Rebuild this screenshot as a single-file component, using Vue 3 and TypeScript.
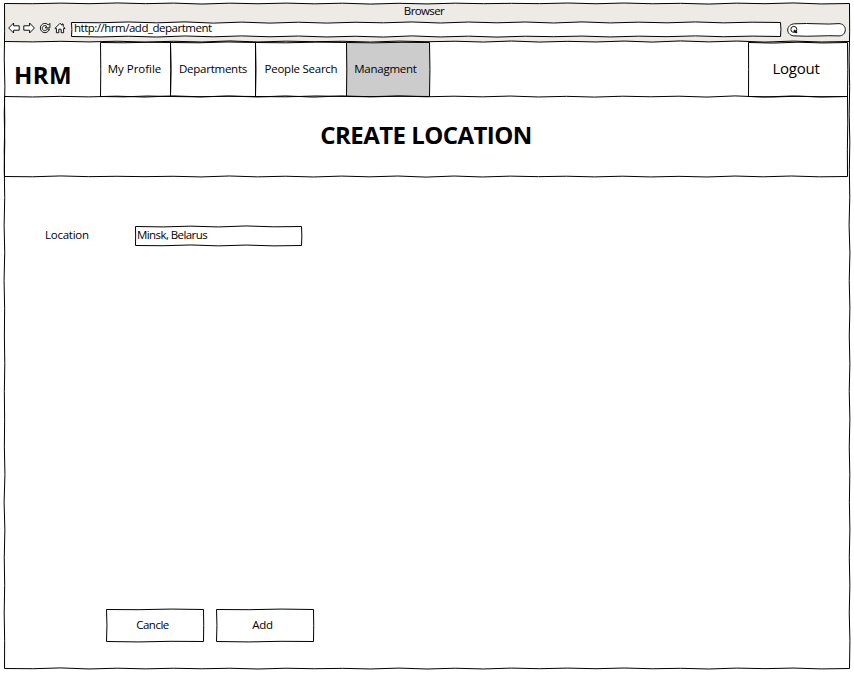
<script setup lang="ts">
import { h, ref, type FunctionalComponent } from 'vue'

type Side = 't' | 'r' | 'b' | 'l'

interface SketchProps {
  w: number
  h: number
  seed?: number
  sides?: string
}

// Small deterministic generator so that a box keeps the same hand-drawn outline.
function random(seed: number): () => number {
  let s = seed * 7919 + 17
  return () => {
    s = (s * 16807) % 2147483647
    return s / 2147483647
  }
}

function edge(x1: number, y1: number, x2: number, y2: number, next: () => number): string {
  const length = Math.hypot(x2 - x1, y2 - y1)
  const steps = Math.max(2, Math.round(length / 28))
  const flat = y1 === y2
  let d = `M${x1} ${y1}`
  for (let i = 1; i <= steps; i++) {
    const t = i / steps
    const reach = flat ? 0.15 + next() * 0.45 : 0.1 + next() * 0.35
    const sway = i === steps ? 0 : (i % 2 ? 1 : -1) * reach
    const x = x1 + (x2 - x1) * t + (flat ? 0 : sway)
    const y = y1 + (y2 - y1) * t + (flat ? sway : 0)
    d += `L${x.toFixed(2)} ${y.toFixed(2)}`
  }
  return d
}

const Sketch: FunctionalComponent<SketchProps> = (props) => {
  const next = random(props.seed ?? 1)
  const r = props.w - 0.5
  const b = props.h - 0.5
  const lines: Record<Side, [number, number, number, number]> = {
    t: [0.5, 0.5, r, 0.5],
    r: [r, 0.5, r, b],
    b: [0.5, b, r, b],
    l: [0.5, 0.5, 0.5, b],
  }
  const paths = (props.sides ?? 'trbl')
    .split('')
    .map((side) => h('path', { d: edge(...lines[side as Side], next) }))
  return h('svg', { class: 'sketch', width: props.w, height: props.h, 'aria-hidden': 'true' }, paths)
}
Sketch.props = ['w', 'h', 'seed', 'sides']

const tabs = [
  { label: 'My Profile', width: 71, key: 'profile' },
  { label: 'Departments', width: 86, key: 'departments' },
  { label: 'People Search', width: 92, key: 'people' },
  { label: 'Managment', width: 84, key: 'management' },
]
const active = ref('management')
const address = ref('http://hrm/add_department')
const location = ref('Minsk, Belarus')
</script>

<template>
  <div class="browser">
    <header class="chrome">
      <div class="caption"><span>Browser</span></div>
      <div class="toolbar">
        <div class="icons">
          <svg width="12" height="12" viewBox="0 0 12 12"><path d="M.7 6 5.6 1V3.8h5.6v4.4H5.6V11Z" /></svg>
          <svg width="12" height="12" viewBox="0 0 12 12"><path d="M11.4 6 6.6 1V3.8H.8v4.4h5.8V11Z" /></svg>
          <svg width="12" height="12" viewBox="0 0 12 12">
            <path d="M9.4 3A4.6 4.6 0 1 0 10.4 7.2L8.3 7A2.6 2.6 0 1 1 7.8 4.4L6 5.8H10.9V1.4Z" />
          </svg>
          <svg width="12" height="12" viewBox="0 0 12 12">
            <path d="M1 6.4 6 1.3 8 3.2V2H9.2V4.4L11 6.4H9.6V10.7H7.2V7.2H4.8V10.7H2.4V6.4Z" />
          </svg>
        </div>
        <div class="address">
          <Sketch :w="710" :h="15" :seed="4" />
          <span>{{ address }}</span>
        </div>
        <div class="search">
          <svg width="60" height="14" viewBox="0 0 60 14">
            <path
              class="pill"
              d="M7.5 .8Q20 .2 31 .8T52 .6C56 .7 58.3 3.4 58.3 6.7S56 12.9 52 12.9Q42 12.5 31 13T8 12.9C3.5 12.9 .7 10.3 .7 7S3.5 1 7.5 .8Z"
            />
            <circle cx="6.8" cy="6.4" r="3" />
            <path class="handle" d="M6.8 7.4 10 9.8" />
          </svg>
        </div>
      </div>
      <Sketch :w="846" :h="39" :seed="9" sides="b" />
    </header>

    <nav class="nav">
      <div class="brand">HRM</div>
      <div
        v-for="(tab, i) in tabs"
        :key="tab.key"
        :class="['tab', tab.key, { active: tab.key === active }]"
        @click="active = tab.key"
      >
        <Sketch :w="tab.width" :h="55" :seed="i + 20" />
        <span>{{ tab.label }}</span>
      </div>
      <div class="logout">
        <Sketch :w="100" :h="55" :seed="31" />
        <span>Logout</span>
      </div>
    </nav>

    <section class="heading">
      <Sketch :w="844" :h="81" :seed="12" />
      <h1>CREATE LOCATION</h1>
    </section>

    <main class="content">
      <div class="field">
        <span class="label">Location</span>
        <div class="input">
          <Sketch :w="167" :h="20" :seed="42" />
          <span>{{ location }}</span>
        </div>
      </div>
      <div class="actions">
        <div class="button cancel">
          <Sketch :w="98" :h="33" :seed="50" />
          <span>Cancle</span>
        </div>
        <div class="button add">
          <Sketch :w="98" :h="33" :seed="50" />
          <span>Add</span>
        </div>
      </div>
    </main>
    <Sketch :w="846" :h="666" :seed="2" />
  </div>
</template>

<style>
body {
  background: #fff;
}
</style>

<style scoped>
.browser {
  position: relative;
  box-sizing: border-box;
  display: flex;
  flex-direction: column;
  width: 846px;
  height: 666px;
  margin: 3px 4px;
  font-family: 'Open Sans', 'Noto Sans', sans-serif;
  font-size: 11.5px;
  line-height: 16px;
  letter-spacing: -0.25px;
  color: #000;
  white-space: nowrap;
}
.sketch {
  position: absolute;
  top: 0;
  left: 0;
  overflow: visible;
  fill: none;
  stroke: #000;
  stroke-width: 1;
  pointer-events: none;
}
.chrome {
  position: relative;
  height: 39px;
  background: #eeebe6;
}
.caption {
  display: flex;
  justify-content: center;
  height: 19px;
  padding-right: 6px;
  letter-spacing: -0.6px;
}
.toolbar {
  display: flex;
}
.icons {
  display: flex;
  gap: 3.3px;
  padding-left: 4px;
}
.icons svg {
  fill: #fff;
  stroke: #111;
  stroke-width: 1;
  stroke-linejoin: round;
}
.address {
  position: relative;
  display: flex;
  align-items: center;
  width: 710px;
  height: 15px;
  margin-left: 5.1px;
  padding: 0 0 3px 3px;
  box-sizing: border-box;
  background: #fff;
  letter-spacing: -0.49px;
}
.search {
  margin: 1px 0 0 6px;
}
.search svg {
  display: block;
  fill: none;
  stroke: #111;
}
.search .pill {
  fill: #fff;
}
.search .handle {
  stroke-width: 2;
}
.nav {
  display: flex;
  height: 55px;
}
.brand {
  width: 96px;
  box-sizing: border-box;
  padding: 16px 0 0 10px;
  font-size: 24px;
  font-weight: 700;
  line-height: 33px;
  letter-spacing: 0.4px;
}
.tab,
.logout {
  position: relative;
  display: flex;
  align-items: center;
  justify-content: center;
  height: 55px;
  padding-bottom: 2px;
  box-sizing: border-box;
}
.tab {
  margin-right: -1px;
}
.profile {
  width: 71px;
  padding-right: 2px;
  letter-spacing: -0.02px;
}
.departments {
  width: 86px;
}
.people {
  width: 92px;
}
.management {
  width: 84px;
  padding-right: 5px;
}
.active {
  background: #ccc;
}
.logout {
  width: 100px;
  margin: 0 2px 0 auto;
  padding: 0 4px 4px 0;
  font-size: 15px;
}
.heading {
  position: relative;
  display: flex;
  align-items: center;
  justify-content: center;
  width: 844px;
  height: 81px;
  margin-top: -1px;
  padding-bottom: 4px;
  box-sizing: border-box;
}
h1 {
  margin: 0;
  font-size: 24px;
  line-height: 33px;
  font-weight: 700;
  letter-spacing: -0.55px;
}
.content {
  display: flex;
  flex: 1;
  flex-direction: column;
  justify-content: space-between;
  padding: 49px 0 27px;
}
.field {
  display: flex;
  align-items: center;
  padding-left: 41px;
}
.label {
  width: 90px;
  padding-bottom: 2px;
}
.input {
  position: relative;
  width: 167px;
  height: 20px;
  padding-left: 2px;
  box-sizing: border-box;
  line-height: 18px;
  letter-spacing: -0.58px;
}
.actions {
  display: flex;
  gap: 12px;
  padding-left: 102px;
}
.button {
  position: relative;
  display: flex;
  align-items: center;
  justify-content: center;
  width: 98px;
  height: 33px;
  padding: 0 5px 2px 0;
  box-sizing: border-box;
}
.cancel {
  letter-spacing: -0.5px;
}
</style>
